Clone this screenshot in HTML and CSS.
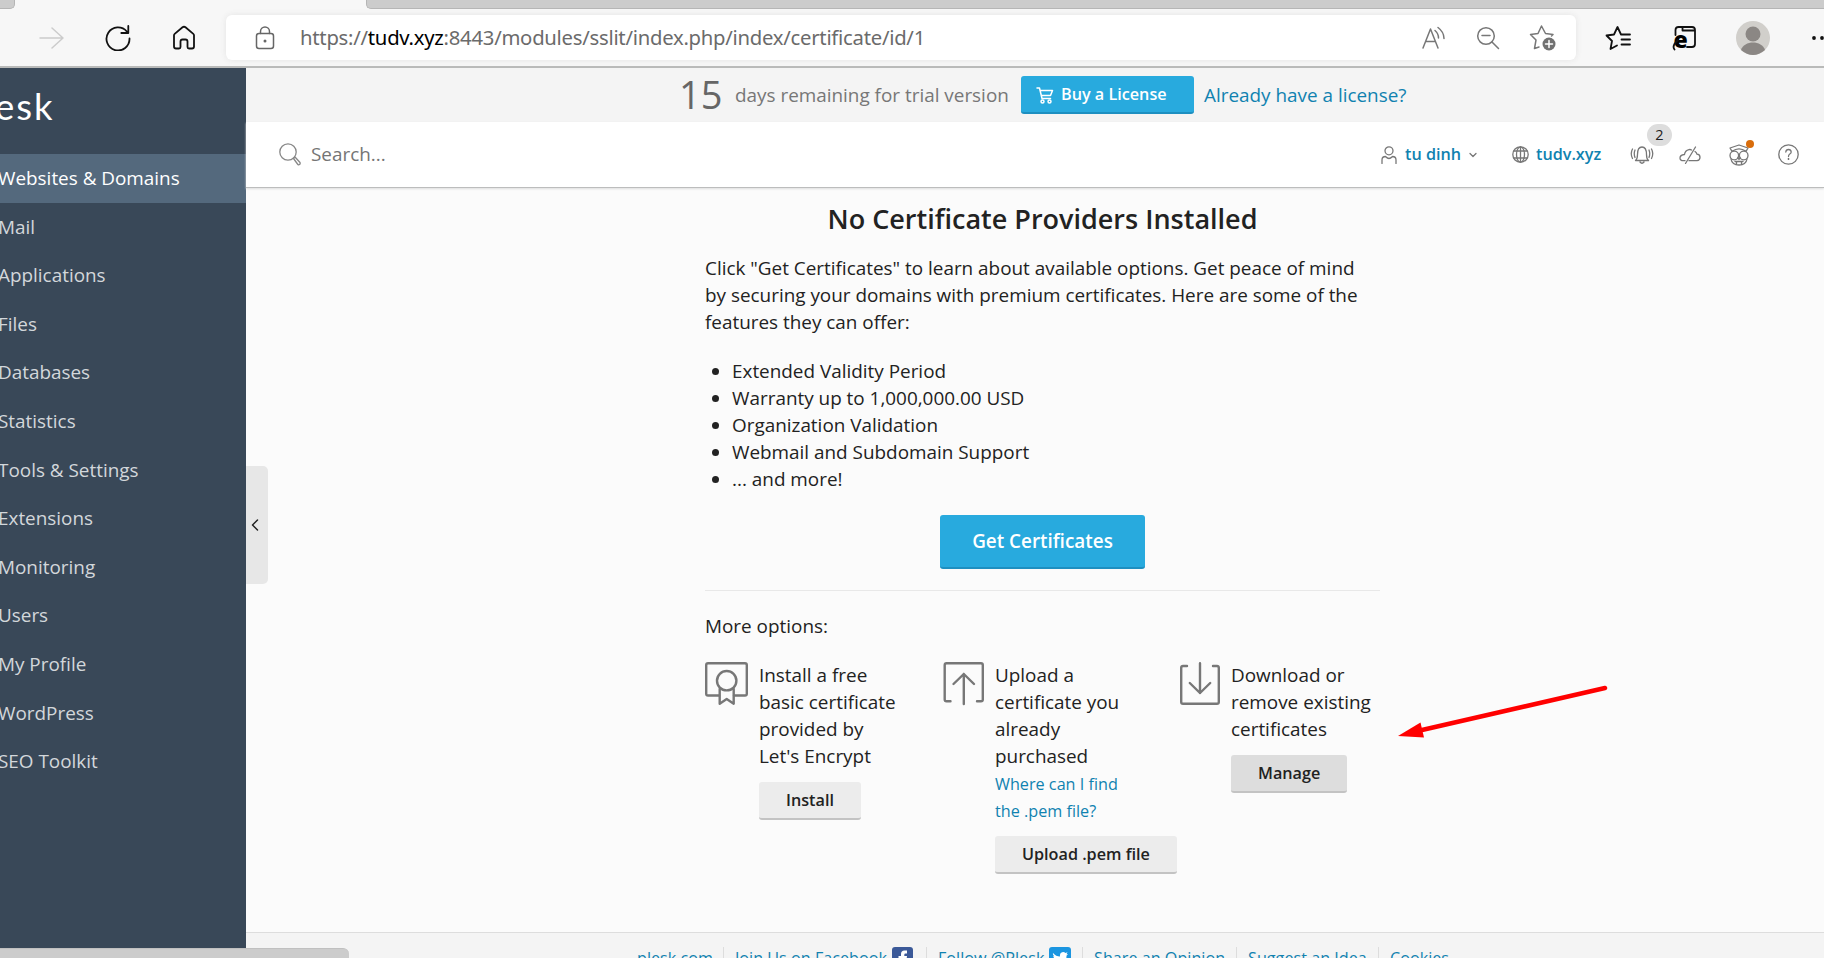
FILE: index.html
```html
<!DOCTYPE html>
<html lang="en">
<head>
<meta charset="utf-8">
<title>SSL/TLS Certificates</title>
<link rel="stylesheet" href="styles.css">
</head>
<body>
<div class="window">
  <header class="browser">
    <div class="tabs"><span class="tab-left"></span><span class="tab-rest"></span></div>
    <div class="toolbar">
      <div class="nav">
        <svg class="ic-forward" width="26" height="24" viewBox="0 0 26 24"><path d="M1 12H24M13 2L24 12L13 22"/></svg>
        <svg class="ic-reload" width="26" height="26" viewBox="0 0 26 26"><path d="M24.5 13.5A11.5 11.5 0 1 1 21.8 6.5M23.3 1V8H16.3"/></svg>
        <svg class="ic-home" width="24" height="25" viewBox="0 0 24 25"><path d="M2 10.2Q2 9.500 2.700 8.900L10.500 2.300Q12 1.200 13.500 2.300L21.300 8.900Q22 9.500 22 10.200V21.500Q22 23.500 20 23.500H17Q15.500 23.500 15.500 22V16.500Q15.500 14.500 13.500 14.500H10.500Q8.500 14.500 8.500 16.500V22Q8.500 23.500 7 23.500H4Q2 23.500 2 21.500Z"/></svg>
      </div>
      <div class="address">
        <svg class="ic-lock" width="20" height="24" viewBox="0 0 20 24"><rect x="1.500" y="7.500" width="17" height="15" rx="2.500"/><path d="M5.500 7.500V5.500a4.500 4.500 0 0 1 9 0V7.500"/><circle class="dot" cx="10" cy="15" r="1.500"/></svg>
        <span class="url">https://<b>tudv.xyz</b>:8443/modules/sslit/index.php/index/certificate/id/1</span>
        <div class="address-icons">
          <svg width="26" height="24" viewBox="0 0 26 24"><path d="M2 22L9.500 3L17 22M4.500 15.500H14.500M14 4.500Q17.500 7.500 17.500 12M17 1.500Q23 6 23 12.500"/></svg>
          <svg width="24" height="24" viewBox="0 0 24 24"><circle cx="10" cy="10" r="8.300"/><path d="M16 16L22.500 22.500M6 9.500H14"/></svg>
          <svg width="28" height="28" viewBox="0 0 28 28"><path d="M10 23L5.500 24.500L7 16L1.500 10.500L9 9.500L12.500 2L16.500 9.500L24 10.500L22.500 12"/><circle class="fill" cx="20" cy="20" r="6.500"/><path class="plus" d="M20 16.500V23.500M16.500 20H23.500"/></svg>
        </div>
      </div>
      <div class="browser-actions">
        <svg class="ic-fav" width="26" height="26" viewBox="0 0 26 26"><path d="M16 9.500L12.500 2L9 9.500L1.500 10.500L7 16L5.500 24L12 20.500M16 9.500H25M16.500 14.500H25M16.500 19.500H25"/></svg>
        <svg class="ic-ie" width="26" height="26" viewBox="0 0 26 26"><path d="M3.500 10V5Q3.500 2 6.500 2H20Q23 2 23 5V19Q23 22 20 22H15M10.500 2V5.500H23"/><text x="1.500" y="23">e</text><path d="M2.500 24.500Q-0.500 21 6 15"/></svg>
        <svg class="avatar" width="34" height="34" viewBox="0 0 34 34"><circle class="disc" cx="17" cy="17" r="17"/><circle class="person" cx="17" cy="13" r="7.500"/><path class="person" d="M5 29C8 19 26 19 29 29Q17 39 5 29Z"/></svg>
        <svg class="ic-more" width="16" height="6" viewBox="0 0 16 6"><circle cx="3" cy="3" r="1.900"/><circle cx="11" cy="3" r="1.900"/></svg>
      </div>
    </div>
  </header>

  <div class="app">
    <aside class="sidebar">
      <div class="logo">esk</div>
      <nav class="menu">
        <a class="item active">Websites &amp; Domains</a>
        <a class="item">Mail</a>
        <a class="item">Applications</a>
        <a class="item">Files</a>
        <a class="item">Databases</a>
        <a class="item">Statistics</a>
        <a class="item">Tools &amp; Settings</a>
        <a class="item">Extensions</a>
        <a class="item">Monitoring</a>
        <a class="item">Users</a>
        <a class="item">My Profile</a>
        <a class="item">WordPress</a>
        <a class="item">SEO Toolkit</a>
      </nav>
      <div class="collapse"><svg width="8" height="12" viewBox="0 0 8 12"><path d="M6.500 1L1.500 6L6.500 11"/></svg></div>
    </aside>

    <div class="page">
      <div class="trial">
        <span class="days">15</span>
        <span class="trial-text">days remaining for trial version</span>
        <a class="buy"><svg width="18" height="18" viewBox="0 0 18 18"><path d="M1 2H3.500L6 12.500H14.500M4 4.500H16.500L14.500 9.500H5.500"/><circle cx="6.500" cy="15.500" r="1.500"/><circle cx="13.500" cy="15.500" r="1.500"/></svg><span>Buy a License</span></a>
        <a class="have">Already have a license?</a>
      </div>
      <div class="topbar">
        <svg class="ic-search" width="22" height="23" viewBox="0 0 22 23"><circle cx="9" cy="9" r="8.200"/><path d="M14.500 15.500L16 14L21 19.500Q21.500 21 20.500 21.500Q19.500 22.300 18.500 21Z"/></svg>
        <span class="search">Search...</span>
        <div class="tools">
          <svg class="ic-user" width="16" height="18" viewBox="0 0 16 18"><circle cx="8" cy="4.800" r="4"/><path d="M1 17.500V14Q1 10.500 4.500 10.500Q6.500 12.500 8 12.500T11.500 10.500Q15 10.500 15 14V17.500"/></svg>
          <a class="user">tu dinh</a>
          <svg class="ic-caret" width="8" height="6" viewBox="0 0 8 6"><path d="M1 1.500L4 4.500L7 1.500"/></svg>
          <svg class="ic-globe" width="17" height="17" viewBox="0 0 17 17"><circle cx="8.500" cy="8.500" r="7.700"/><ellipse cx="8.500" cy="8.500" rx="4" ry="7.700"/><path d="M2 5H15M2 12H15M8.500 1V16"/></svg>
          <a class="domain">tudv.xyz</a>
          <div class="bell"><svg width="24" height="20" viewBox="0 0 24 20"><path d="M5.500 15.500Q7.500 14 7.500 9.500Q7.500 2 12 2T16.500 9.500Q16.500 14 18.500 15.500ZM10 17Q12 19.500 14 17M5 5Q3.500 8.500 5 12.500M2.500 4Q0 8.500 2.500 13.500M19 5Q20.500 8.500 19 12.500M21.500 4Q24 8.500 21.500 13.500"/></svg><span class="badge">2</span></div>
          <svg class="ic-cloud" width="22" height="18" viewBox="0 0 22 18"><path d="M12.500 4Q11.500 3.300 10 3.600Q6 4.500 5.500 8.500Q1 9 1 12Q1 14.700 4.500 14.700H6M10 14.700H18Q21 14.200 21 11.200Q21 8.500 18 8.200Q17.500 6.500 16 5.500M16.500 1L6.500 17.500"/></svg>
          <div class="mascot"><svg width="22" height="22" viewBox="0 0 22 22"><path d="M2 4L11 1L20 4L18 7.300Q11 2.500 4 7.300Z"/><circle cx="6.300" cy="11.500" r="4.300"/><circle cx="15.700" cy="11.500" r="4.300"/><path d="M3 15Q4 21 11 21T19 15M9.800 13.500L11 15.500L12.200 13.500M7 17.500H15M8.500 17.500V20M13.500 17.500V20"/></svg><span class="notice"></span></div>
          <svg class="ic-help" width="21" height="21" viewBox="0 0 21 21"><circle cx="10.500" cy="10.500" r="9.700"/><path d="M7.800 8Q8 5.500 10.500 5.500T13.200 8Q13.200 9.300 11.500 10.300Q10.500 11 10.500 12.500"/><circle class="dot" cx="10.500" cy="15" r=".9"/></svg>
        </div>
      </div>

      <main class="content">
        <section class="panel">
          <h1>No Certificate Providers Installed</h1>
          <p class="intro">Click "Get Certificates" to learn about available options. Get peace of mind<br>by securing your domains with premium certificates. Here are some of the<br>features they can offer:</p>
          <ul>
            <li>Extended Validity Period</li>
            <li>Warranty up to 1,000,000.00 USD</li>
            <li>Organization Validation</li>
            <li>Webmail and Subdomain Support</li>
            <li>... and more!</li>
          </ul>
          <div class="cta-row"><a class="cta">Get Certificates</a></div>
          <div class="more">More options:</div>
          <div class="options">
            <div class="option">
              <svg width="44" height="44" viewBox="0 0 44 44"><path d="M14 33.500H3Q1.200 33.500 1.200 31.700V3Q1.200 1.200 3 1.200H40Q41.800 1.200 41.800 3V31.700Q41.800 33.500 40 33.500H29"/><circle cx="21.700" cy="18.700" r="9.700"/><path d="M14.700 27V41.700L21.700 37L28.700 41.700V27"/></svg>
              <div class="body"><p>Install a free<br>basic certificate<br>provided by<br>Let's Encrypt</p><a class="btn">Install</a></div>
            </div>
            <div class="option">
              <svg width="44" height="44" viewBox="0 0 44 44"><path d="M9.500 39.200H5.500Q3.700 39.200 3.700 37.400V3Q3.700 1.200 5.500 1.200H40Q41.800 1.200 41.800 3V37.400Q41.800 39.200 40 39.200H36M22.800 42V12M12.500 22L22.800 12L33 22"/></svg>
              <div class="body"><p>Upload a<br>certificate you<br>already<br>purchased</p><a class="hint">Where can I find<br>the .pem file?</a><a class="btn">Upload .pem file</a></div>
            </div>
            <div class="option">
              <svg width="44" height="44" viewBox="0 0 44 44"><path d="M10 4H6Q4.200 4 4.200 5.800V40Q4.200 41.800 6 41.800H40Q41.800 41.800 41.800 40V5.800Q41.800 4 40 4H36M23 1.200V31M12.800 21L23 31L33.200 21"/></svg>
              <div class="body"><p>Download or<br>remove existing<br>certificates</p><a class="btn hover">Manage</a></div>
            </div>
          </div>
        </section>
        <svg class="pointer" width="214" height="56" viewBox="0 0 214 56"><path class="shaft" d="M24 47L207 5"/><path class="head" d="M0 53L22.500 39.500L26 54.500Z"/></svg>
      </main>

      <footer class="footer">
        <a class="f1">plesk.com</a>
        <a class="f2">Join Us on Facebook <svg width="21" height="21" viewBox="0 0 21 21"><rect class="fb" width="21" height="21" rx="3"/><path class="mark" d="M9 21V12H6.500V9H9V7Q9 3.500 12.500 3.500H15V6.500H13.500Q12.300 6.500 12.300 7.700V9H15L14.600 12H12.300V21Z"/></svg></a>
        <a class="f3">Follow @Plesk <svg width="22" height="21" viewBox="0 0 22 21"><rect class="tw" width="22" height="21" rx="3"/><path class="mark" d="M4 6Q7 9.500 11 9.500Q10.500 5.500 14 5Q15.500 5 16.500 6L18.500 5.300L17.500 7.300L19 7L17.500 8.800Q17.500 17 10 17Q6.500 17 4 15.500Q7 15.500 8.500 14.500Q6 14 5.500 12.300H7Q4.500 11.500 4.300 9L5.500 9.300Q3.500 8 4 6Z"/></svg></a>
        <a class="f4">Share an Opinion</a>
        <a class="f5">Suggest an Idea</a>
        <a class="f6">Cookies</a>
      </footer>
    </div>
    <div class="status"></div>
  </div>
</div>
</body>
</html>
```
FILE: styles.css
```css
* { box-sizing: border-box; }
body { margin: 0; font-family: "Open Sans", "Noto Sans", sans-serif; font-size: 18.900px; color: #222; }
svg { display: block; flex: none; fill: none; stroke: #777; stroke-width: 1.5; stroke-linejoin: round; stroke-linecap: round; }
p, ul, h1 { margin: 0; }
.window { width: 1824px; height: 958px; overflow: hidden; display: flex; flex-direction: column; background: #fbfbfb; }

.browser { height: 68px; flex: none; background: #f7f7f7; border-bottom: 2px solid #b9bab9; }
.tabs { height: 9px; display: flex; justify-content: space-between; }
.tab-left { width: 15px; background: #ccc; border: solid #b5b5b5; border-width: 0 1px 1px 0; border-radius: 0 0 5px 0; }
.tab-rest { width: 1458px; background: #ccc; border: solid #b5b5b5; border-width: 0 0 1px 1px; border-radius: 0 0 0 5px; }
.toolbar { height: 57px; display: flex; align-items: center; }
.nav { width: 226px; flex: none; height: 57px; display: flex; align-items: center; }
.ic-forward { margin-left: 39px; stroke: #ccc; }
.ic-reload { margin-left: 40px; stroke: #111; stroke-width: 1.8; }
.ic-home { margin-left: 41px; stroke: #111; stroke-width: 1.8; }
.address { width: 1350px; flex: none; height: 45px; border-radius: 6px; background: #fff; box-shadow: 0 0 6px #e4e4e4; display: flex; align-items: center; padding: 0 19px 0 29px; }
.ic-lock { stroke: #666; }
.dot { fill: #666; stroke: none; }
.url { margin-left: 25px; padding-bottom: 2px; font-family: "Noto Sans", sans-serif; font-size: 20.300px; letter-spacing: -.26px; color: #6b6b6b; white-space: nowrap; }
.url b { font-weight: 400; color: #000; }
.address-icons { margin-left: auto; display: flex; align-items: center; gap: 29px; }
.fill { fill: #717171; stroke: none; }
.plus { stroke: #fff; }
.browser-actions { display: flex; flex: none; align-items: center; margin-left: 29px; }
.ic-fav, .ic-ie { stroke: #111; stroke-width: 1.800; }
.ic-ie { margin-left: 41px; }
.ic-ie text { font: 800 23px "Open Sans", sans-serif; fill: #000; stroke: none; }
.avatar { margin-left: 38px; stroke: none; }
.disc { fill: #d1cfcb; }
.person { fill: #8b8784; }
.ic-more { margin-left: 41px; fill: #111; stroke: none; }

.app { flex: 1; display: flex; position: relative; min-height: 0; }
.sidebar { width: 246px; flex: none; background: #394858; position: relative; }
.logo { height: 86px; padding-top: 14px; margin-left: -5px; line-height: 48px; font-family: Lato, "Open Sans", sans-serif; font-size: 36.500px; letter-spacing: 2px; color: #fff; }
.menu { display: flex; flex-direction: column; }
.item { height: 48.600px; line-height: 48.600px; color: #d3d7db; margin-left: -2px; white-space: nowrap; }
.item.active { background: #54697d; color: #fff; }
.collapse { position: absolute; left: 246px; top: 398px; width: 22px; height: 118px; background: #e7e7e7; border-radius: 0 5px 5px 0; display: flex; align-items: center; padding-left: 5px; }
.collapse svg { stroke: #222; }

.page { flex: 1; display: flex; flex-direction: column; min-width: 0; }
.trial { height: 54px; flex: none; background: #f4f4f4; display: flex; align-items: center; padding-left: 433px; color: #777; white-space: nowrap; }
.days { width: 56px; padding-bottom: 2px; font-size: 38px; color: #666; }
.trial-text { width: 286px; }
.buy { width: 173px; height: 38px; background: #28aade; border-bottom: 2px solid #1e8fc0; border-radius: 3px; color: #fff; font-weight: 600; font-size: 16.200px; display: flex; align-items: center; padding-left: 15px; }
.buy svg { stroke: #fff; margin-right: 7px; margin-top: 2px; }
.have { margin-left: 10px; color: #1082b0; }
.topbar { height: 66px; flex: none; background: #fff; border-bottom: 1px solid #bcbdbd; box-shadow: 0 1px 2px #ddd; display: flex; align-items: center; padding: 0 25px 0 33px; position: relative; }
.topbar svg { stroke-width: 1.300; }
.ic-search { stroke: #888; }
.search { margin-left: 10px; padding-bottom: 2px; color: #757575; }
.tools { margin-left: auto; display: flex; align-items: center; white-space: nowrap; }
.user, .domain { font-size: 16.200px; font-weight: 600; color: #1082b0; padding-bottom: 2px; }
.user { margin-left: 8px; width: 56px; }
.ic-caret { margin-left: 8px; }
.ic-globe { margin-left: 35px; }
.domain { margin-left: 7px; width: 66px; }
.bell { margin-left: 28px; position: relative; }
.badge { position: absolute; left: 17px; top: -21px; width: 25px; height: 22px; border-radius: 11px; background: #ddd; color: #222; font-size: 14.500px; line-height: 21px; text-align: center; }
.ic-cloud { margin-left: 25px; }
.mascot { margin-left: 27px; position: relative; }
.notice { position: absolute; left: 18px; top: -4px; width: 8px; height: 8px; border-radius: 4px; background: #d96d0b; }
.ic-help { margin-left: 28px; }

.content { flex: 1; position: relative; display: flex; padding-left: 459px; min-height: 0; }
.panel { width: 675px; padding-top: 13px; }
h1 { font-size: 27px; line-height: 36px; font-weight: 600; text-align: center; white-space: nowrap; }
.intro { margin-top: 18px; line-height: 27px; white-space: nowrap; }
ul { margin-top: 22px; padding-left: 27px; line-height: 27px; }
.cta-row { display: flex; justify-content: center; padding: 22px 0 21px; border-bottom: 1px solid #e8e8e8; }
.cta { width: 205px; height: 54px; line-height: 52px; text-align: center; background: #28aade; border-bottom: 2px solid #1e8fc0; border-radius: 3px; color: #fff; font-weight: 600; }
.more { margin-top: 22px; line-height: 27px; }
.options { margin-top: 22px; display: grid; grid-template-columns: 236px 236px 203px; }
.option { display: flex; gap: 10px; }
.option svg { stroke-width: 2.400; }
.body { display: flex; flex-direction: column; align-items: flex-start; line-height: 27px; white-space: nowrap; }
.hint { padding-top: 1px; font-size: 16.200px; color: #1082b0; }
.btn { margin-top: 12px; height: 38px; line-height: 36px; padding: 0 27px; background: #ececec; border-bottom: 2px solid #c3c3c3; border-radius: 3px; font-size: 16.200px; font-weight: 600; }
.hint + .btn { margin-top: 11px; }
.btn.hover { background: #ddd; }
.pointer { position: absolute; left: 1152px; top: 495px; stroke: none; }
.shaft { stroke: red; stroke-width: 4.500; }
.head { fill: red; }

.footer { height: 26px; flex: none; background: #f4f4f4; border-top: 1px solid #ddd; display: flex; align-items: flex-start; padding: 14px 0 0 390px; overflow: hidden; font-size: 16.200px; line-height: 22px; white-space: nowrap; color: #1082b0; }
.footer a { padding-left: 11px; border-left: 1px solid #ddd; display: flex; gap: 5px; height: 22px; }
.footer .f1 { border-color: transparent; padding-left: 0; width: 87px; }
.footer svg { stroke: none; }
.f2 { width: 203px; }
.f3 { width: 156px; }
.f4 { width: 154px; }
.f5 { width: 142px; }
.fb { fill: #3b5998; }
.tw { fill: #1b95e0; }
.mark { fill: #fff; }
.status { position: absolute; left: 0; bottom: 0; width: 349px; height: 10px; background: #ccc; border-top: 1px solid #c0c0c0; border-radius: 0 6px 0 0; }
```
